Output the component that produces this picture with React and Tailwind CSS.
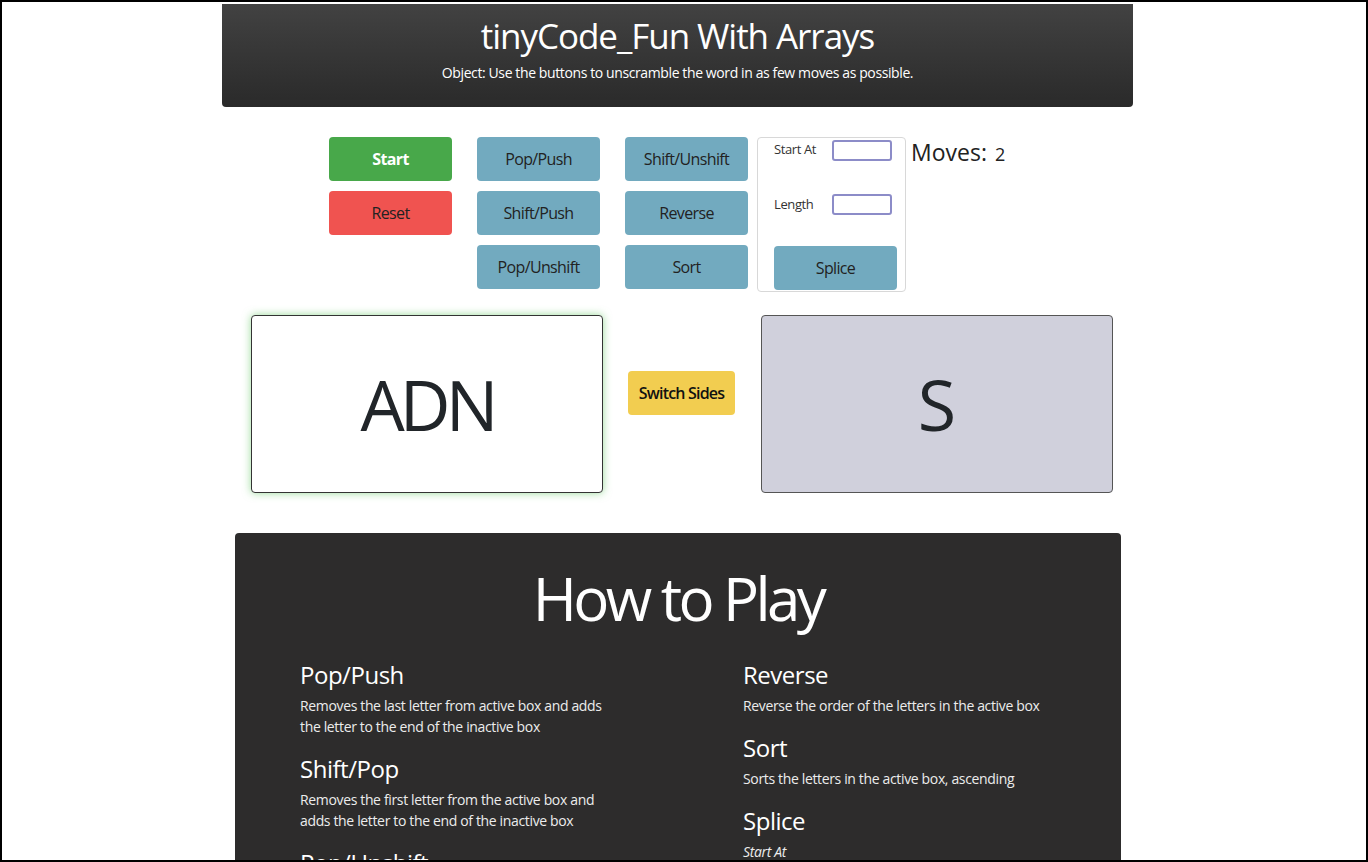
import { useState } from "react";

const FONT = { fontFamily: '"Open Sans", "Noto Sans", sans-serif' };

const ActionButton = ({ label, className = "" }) => (
  <button
    type="button"
    className={`w-[123px] h-[44px] rounded-[4px] text-[16px] tracking-[-0.04em] text-[#222] bg-[#72aabf] ${className}`}
  >
    {label}
  </button>
);

const rules = {
  left: [
    {
      title: "Pop/Push",
      text: "Removes the last letter from active box and adds the letter to the end of the inactive box",
    },
    {
      title: "Shift/Pop",
      text: "Removes the first letter from the active box and adds the letter to the end of the inactive box",
    },
    {
      title: "Pop/Unshift",
      text: "Removes the last letter from the active box and adds the letter to the start of the inactive box",
    },
  ],
  right: [
    { title: "Reverse", text: "Reverse the order of the letters in the active box" },
    { title: "Sort", text: "Sorts the letters in the active box, ascending" },
  ],
};

const Rule = ({ title, text }) => (
  <div>
    <div className="text-[24px] leading-[29px] tracking-[-0.02em] mb-[6px]">{title}</div>
    <div className="text-[14px] leading-[21px] tracking-[-0.025em] max-w-[315px] mb-[17px] text-[#ececec]">
      {text}
    </div>
  </div>
);

const App = () => {
  const [active, setActive] = useState("ADN");
  const [inactive] = useState("S");
  const [moves] = useState(2);

  return (
    <div className="h-[862px] overflow-hidden border-2 border-black bg-white" style={FONT}>
      <div className="w-[911px] ml-[220px] flex flex-col">
        <header className="mt-[2px] h-[103px] rounded-b-[4px] bg-gradient-to-b from-[#424242] to-[#2a2a2a] text-white text-center pt-[10px]">
          <h1 className="text-[35px] leading-[43px] tracking-[-0.03em]">tinyCode_Fun With Arrays</h1>
          <p className="text-[14px] leading-[20px] tracking-[-0.028em] mt-[6px]">
            Object: Use the buttons to unscramble the word in as few moves as possible.
          </p>
        </header>

        <div className="mt-[30px] pl-[107px] flex items-start">
          <div className="flex flex-col gap-[10px]">
            <button
              type="button"
              className="w-[123px] h-[44px] rounded-[4px] bg-[#48a84a] text-white font-bold tracking-[-0.04em] text-[16px]"
            >
              Start
            </button>
            <button
              type="button"
              className="w-[123px] h-[44px] rounded-[4px] bg-[#f05350] text-[#222] tracking-[-0.04em] text-[16px]"
            >
              Reset
            </button>
          </div>
          <div className="ml-[25px] flex flex-col gap-[10px]">
            <ActionButton label="Pop/Push" />
            <ActionButton label="Shift/Push" />
            <ActionButton label="Pop/Unshift" />
          </div>
          <div className="ml-[25px] flex flex-col gap-[10px]">
            <ActionButton label="Shift/Unshift" />
            <ActionButton label="Reverse" />
            <ActionButton label="Sort" />
          </div>
          <div className="ml-[9px] w-[149px] h-[155px] border border-[#d8d8d8] rounded-[4px] pl-[16px] pt-[2px]">
            <div className="flex items-start h-[54px]">
              <span className="text-[13px] tracking-[-0.03em] text-[#333] w-[58px]">Start At</span>
              <input className="w-[60px] h-[21px] border-2 border-[#8c8cc8] rounded-[3px] outline-none" />
            </div>
            <div className="flex items-start h-[52px]">
              <span className="text-[13px] tracking-[-0.03em] text-[#333] w-[58px] pt-[1px]">Length</span>
              <input className="w-[60px] h-[21px] border-2 border-[#8c8cc8] rounded-[3px] outline-none" />
            </div>
            <ActionButton label="Splice" />
          </div>
          <div className="ml-[5px] text-[#222] flex items-baseline gap-[8px] -mt-[2px]">
            <span className="text-[23px]">Moves:</span>
            <span className="text-[18px]">{moves}</span>
          </div>
        </div>

        <div className="mt-[23px] ml-[29px] flex items-start">
          <div className="w-[352px] h-[178px] rounded-[4px] border border-[#333] bg-white shadow-[0_0_8px_rgba(70,190,70,0.55)] flex items-center justify-center text-[70px] tracking-[-0.07em] text-[#212529]">
            {active}
          </div>
          <button
            type="button"
            onClick={() => setActive(active)}
            className="ml-[25px] mt-[56px] w-[107px] h-[44px] rounded-[4px] bg-[#f2cd50] text-[#111] text-[16px] tracking-[-0.05em] font-semibold"
          >
            Switch Sides
          </button>
          <div className="ml-[26px] w-[352px] h-[178px] rounded-[4px] border border-[#555] bg-[#d0d0dc] flex items-center justify-center text-[70px] text-[#212529]">
            {inactive}
          </div>
        </div>

        <section className="mt-[40px] ml-[13px] w-[886px] rounded-t-[4px] bg-[#2d2c2c] text-white pt-[29px] pb-[40px]">
          <h2 className="text-center text-[60px] leading-[72px] tracking-[-0.06em]">How to Play</h2>
          <div className="mt-[26px] pl-[65px] grid grid-cols-[443px_1fr]">
            <div>
              {rules.left.map((r) => (
                <Rule key={r.title} title={r.title} text={r.text} />
              ))}
            </div>
            <div>
              {rules.right.map((r) => (
                <Rule key={r.title} title={r.title} text={r.text} />
              ))}
              <div className="text-[24px] leading-[29px] tracking-[-0.02em] mb-[6px]">Splice</div>
              <div className="text-[14px] leading-[21px] tracking-[-0.025em] italic text-[#ececec]">Start At</div>
              <div className="text-[14px] leading-[21px] tracking-[-0.025em] text-[#ececec]">
                The position in the active box to start removing letters
              </div>
            </div>
          </div>
        </section>
      </div>
    </div>
  );
};

export default App;
